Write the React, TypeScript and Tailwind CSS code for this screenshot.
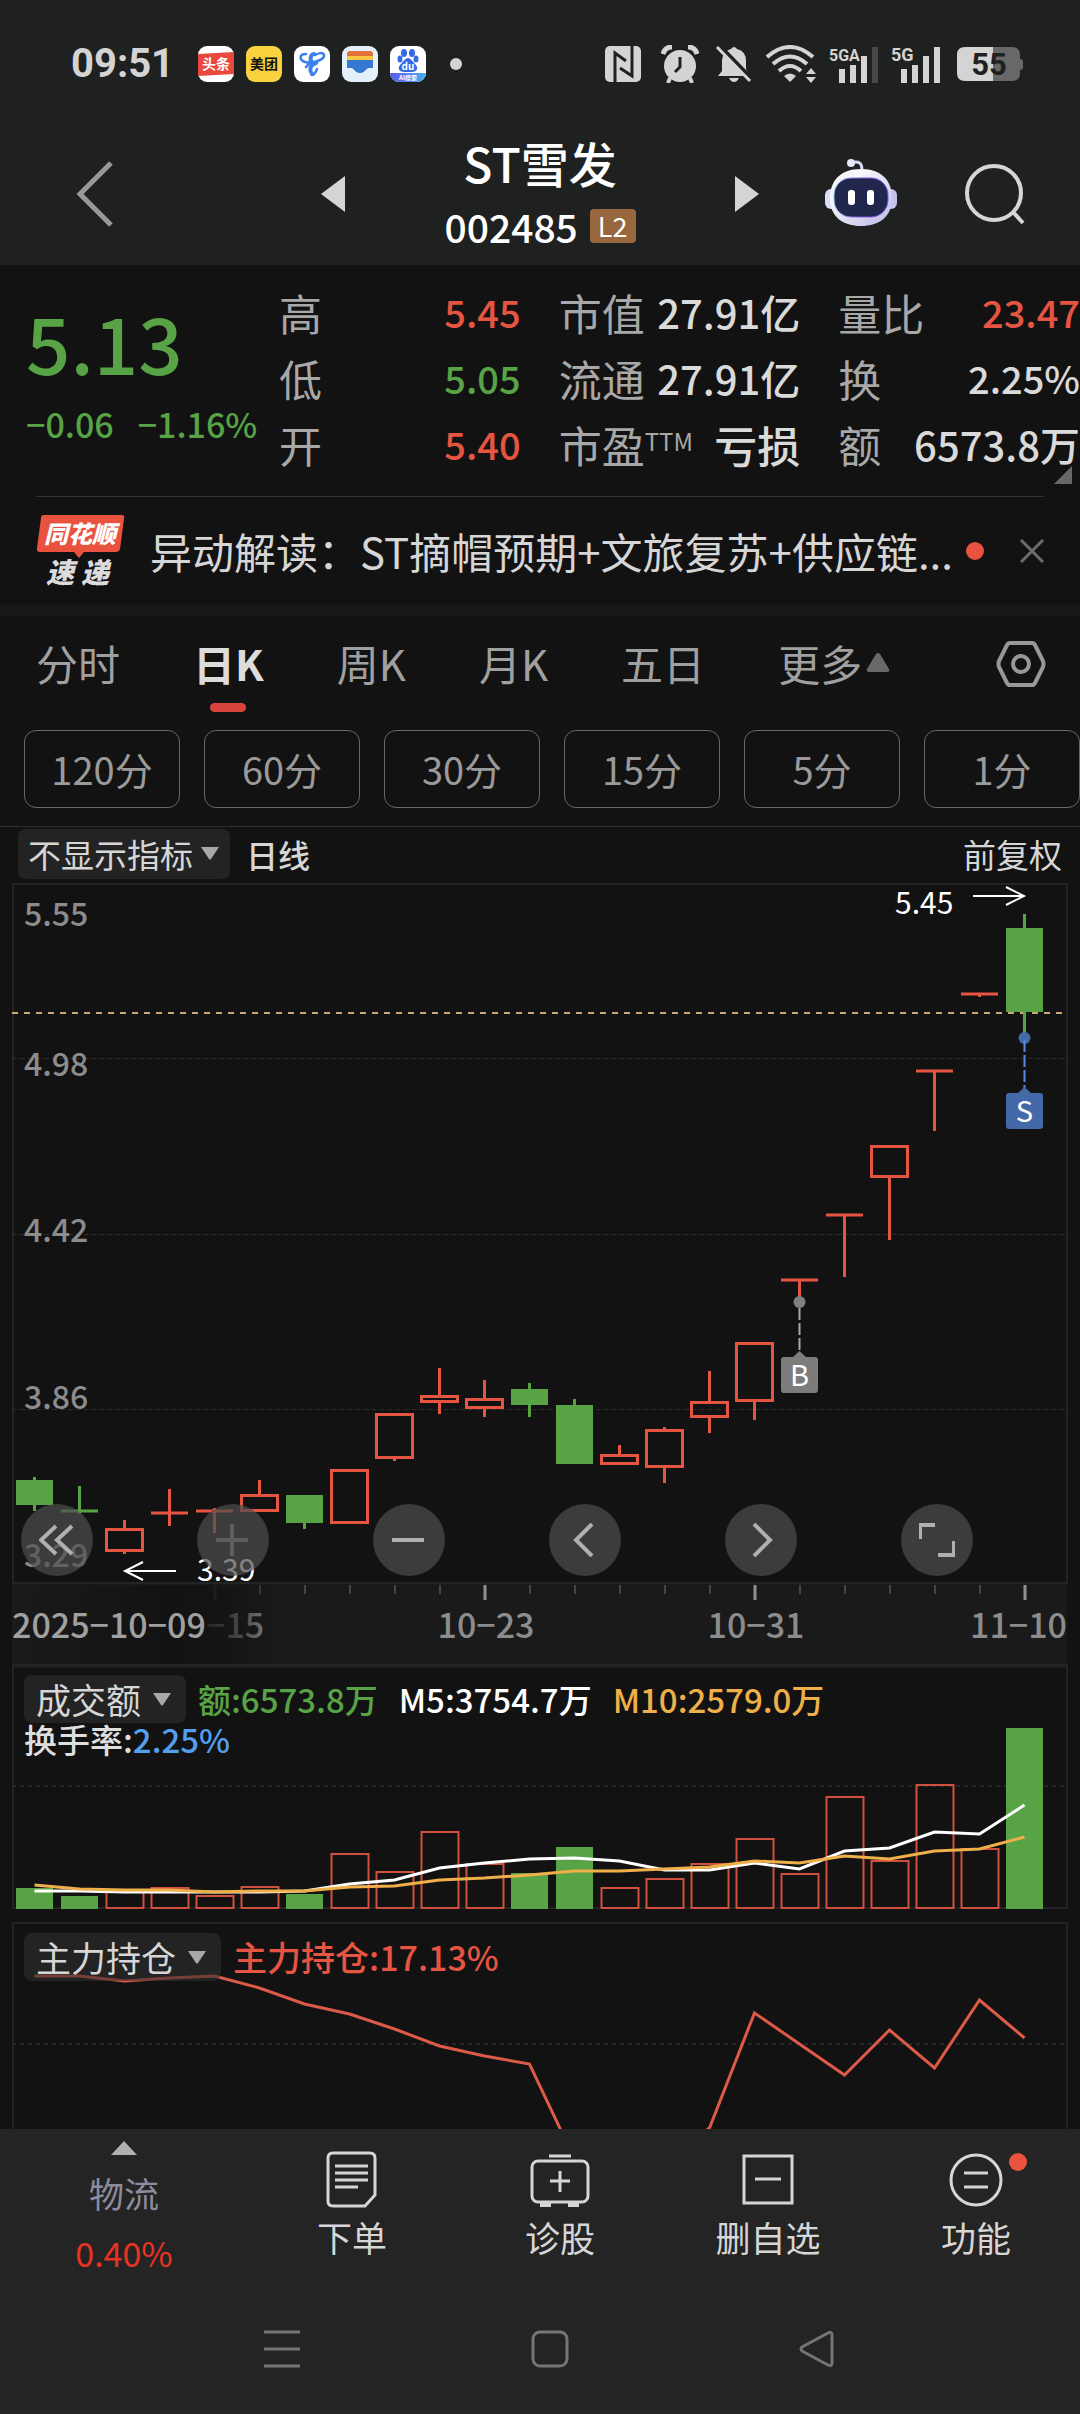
import React from "react";

const UP = "#e65541";
const DOWN = "#57a345";

// [shape, bodyTop, bodyBottom, high, low]
type Candle = ["up" | "down" | "flat" | "flatDown", number, number, number, number];

const CANDLES: Candle[] = [
  ["down", 1480, 1505, 1477, 1511],
  ["flatDown", 1511, 1511, 1486, 1514],
  ["up", 1528, 1552, 1520, 1554],
  ["flat", 1513, 1513, 1489, 1526],
  ["flat", 1511, 1511, 1508, 1533],
  ["up", 1494, 1512, 1480, 1512],
  ["down", 1495, 1523, 1495, 1529],
  ["up", 1469, 1524, 1469, 1524],
  ["up", 1413, 1459, 1413, 1461],
  ["up", 1395, 1403, 1368, 1414],
  ["up", 1398, 1409, 1380, 1417],
  ["down", 1389, 1405, 1383, 1417],
  ["down", 1405, 1464, 1399, 1464],
  ["up", 1454, 1465, 1445, 1465],
  ["up", 1429, 1468, 1427, 1483],
  ["up", 1401, 1418, 1371, 1433],
  ["up", 1342, 1402, 1342, 1420],
  ["flat", 1280, 1280, 1280, 1302],
  ["flat", 1215, 1215, 1215, 1277],
  ["up", 1145, 1178, 1145, 1240],
  ["flat", 1071, 1071, 1071, 1131],
  ["flat", 994, 994, 994, 997],
  ["down", 928, 1012, 914, 1038],
];

const VOLUMES = [
  1888, 1896, 1892, 1888, 1896, 1887, 1894, 1854, 1872, 1832, 1864, 1873, 1847,
  1888, 1879, 1864, 1839, 1874, 1797, 1861, 1785, 1849, 1728,
];
const VOLUME_DOWN = [0, 1, 6, 11, 12, 22];

const MA5 = [
  1891, 1891, 1892, 1892, 1892, 1892, 1891, 1884, 1880, 1868, 1863, 1859, 1858,
  1861, 1870, 1870, 1863, 1869, 1851, 1848, 1832, 1834, 1805,
];
const MA10 = [
  1885, 1889, 1890, 1890, 1892, 1891, 1891, 1887, 1886, 1880, 1878, 1875, 1871,
  1871, 1869, 1867, 1861, 1863, 1856, 1859, 1851, 1849, 1837,
];
const HOLDING = [
  1976, 1976, 1981, 1978, 1976, 1988, 2004, 2014, 2029, 2046, 2056, 2064, 2159,
  2200, 2160, 2128, 2013, 2044, 2075, 2030, 2068, 2000, 2038,
];

const cx = (i: number) => 34.5 + i * 45;
const toPoints = (ys: number[]) => ys.map((y, i) => `${cx(i)},${y}`).join(" ");

const StatusBar: React.FC = () => (
  <div className="h-32 pl-[71px] pr-[57px] flex items-center text-[#d4d4d4]">
    <span className="w-[127px] font-[Roboto] font-bold text-[40px] leading-[48px]">09:51</span>
    <div className="flex items-center gap-3">
      <svg width="36" height="36" viewBox="0 0 36 36">
        <rect width="36" height="36" rx="9" fill="#fff" />
        <path d="M0 8L36 6V28L0 30Z" fill="#e8483d" />
        <text x="18" y="23" fontSize="14" fontWeight="700" textAnchor="middle" fill="#fff">头条</text>
      </svg>
      <svg width="36" height="36" viewBox="0 0 36 36">
        <rect width="36" height="36" rx="9" fill="#fad13e" />
        <text x="18" y="23" fontSize="14" fontWeight="700" textAnchor="middle" fill="#111">美团</text>
      </svg>
      <svg width="36" height="36" viewBox="0 0 36 36" fill="none" stroke="#3d7ff0" strokeLinecap="round">
        <rect width="36" height="36" rx="9" fill="#fff" stroke="none" />
        <path d="M12 8C5 8 5 14 11 16C20 18 31 13 30 9C29 6 24 7 21 9" strokeWidth="2.5" />
        <path d="M20 8C16 8 15 16 20 18C16 20 15 24 18 28" strokeWidth="4" />
        <path d="M12 21C15 17 19 16 23 16M18 29C21 29 22 25 23 23" strokeWidth="2.5" />
      </svg>
      <svg width="36" height="36" viewBox="0 0 36 36">
        <rect width="36" height="36" rx="9" fill="#e3f0fb" />
        <path d="M5 8Q5 5 8 5H28Q31 5 31 8V12H5Z" fill="#e2703a" />
        <path d="M5 10H31V15H5Z" fill="#f7c744" />
        <path d="M5 14H31V22H27C24 22 23 27 18 27C13 27 12 22 9 22H5Z" fill="#3478d4" />
      </svg>
      <svg width="36" height="36" viewBox="0 0 36 36">
        <defs>
          <clipPath id="du">
            <rect width="36" height="36" rx="9" />
          </clipPath>
          <linearGradient id="band" x1="0" y1="0" x2="1" y2="0">
            <stop offset="0" stopColor="#5a5cf0" />
            <stop offset="1" stopColor="#4ab0f0" />
          </linearGradient>
        </defs>
        <g clipPath="url(#du)">
          <rect width="36" height="36" fill="#fff" />
          <rect y="27" width="36" height="9" fill="url(#band)" />
          <g fill="#3569e8">
            <ellipse cx="14" cy="7" rx="3" ry="4" />
            <ellipse cx="22" cy="7" rx="3" ry="4" />
            <ellipse cx="10" cy="13" rx="2.500" ry="3.500" />
            <ellipse cx="26" cy="13" rx="2.500" ry="3.500" />
            <path d="M18 12C21 12 23 16 26 19C29 23 26 26 22 26H14C10 26 7 23 10 19C13 16 15 12 18 12Z" />
          </g>
          <text x="18" y="24" fontSize="10" fontWeight="700" textAnchor="middle" fill="#fff">du</text>
          <text x="18" y="34" fontSize="6" fontWeight="700" textAnchor="middle" fill="#fff">AI搜索</text>
        </g>
      </svg>
    </div>
    <span className="ml-6 size-3 rounded-full bg-[#d4d4d4]" />

    <svg className="ml-auto" width="36" height="36" viewBox="0 0 36 36">
      <rect width="36" height="36" rx="5" fill="#d4d4d4" />
      <path d="M10 36V7L21 15M27 0V30L15 22" fill="none" stroke="#1f2120" strokeWidth="3" />
    </svg>
    <svg className="ml-5" width="38" height="38" viewBox="0 0 38 38">
      <circle cx="19" cy="21" r="16" fill="#d4d4d4" />
      <path d="M2 9Q4 2 11 2M36 9Q34 2 27 2" fill="none" stroke="#d4d4d4" strokeWidth="5" />
      <path d="M9 33L7 38M29 33L31 38" stroke="#d4d4d4" strokeWidth="4" />
      <path d="M19 12V22L14 27" fill="none" stroke="#1f2120" strokeWidth="3" />
    </svg>
    <svg className="ml-4" width="38" height="38" viewBox="0 0 38 38">
      <path d="M3 31L7 26V15Q8 6 16 4Q19 0 22 4Q31 6 31 16V24L34 31Z" fill="#d4d4d4" />
      <path d="M14 33H24Q22 37 19 37Q16 37 14 33Z" fill="#d4d4d4" />
      <path d="M4 0L38 35" stroke="#1f2120" strokeWidth="4" />
      <path d="M2 2L35 36" stroke="#d4d4d4" strokeWidth="3" />
    </svg>
    <svg className="ml-3" width="52" height="38" viewBox="0 0 52 38" fill="none" stroke="#d4d4d4">
      <path d="M2 12Q25 -8 48 12" strokeWidth="4" />
      <path d="M8 19Q25 4 42 19" strokeWidth="4" />
      <path d="M14 26Q25 16 36 26" strokeWidth="4" />
      <path d="M19 31Q25 26 31 31L25 37Z" fill="#d4d4d4" stroke="none" />
      <path d="M41 29L46 23L51 29ZM41 32L46 38L51 32Z" fill="#d4d4d4" stroke="none" />
    </svg>
    <svg className="ml-3 overflow-visible" width="50" height="40" viewBox="0 0 50 40" fill="#d4d4d4">
      <text x="0" y="17" fontSize="16" fontWeight="700" fontFamily="Roboto">5GA</text>
      <path d="M10 25h6v14h-6zM21 21h6v18h-6zM32 12h6v27h-6z" />
      <path d="M43 3h6v36h-6z" fill="#484848" />
    </svg>
    <svg className="ml-3 overflow-visible" width="50" height="40" viewBox="0 0 50 40" fill="#d4d4d4">
      <text x="0" y="17" fontSize="18" fontWeight="700" fontFamily="Roboto">5G</text>
      <path d="M10 25h6v14h-6zM21 21h6v18h-6zM32 12h6v27h-6zM43 3h6v36h-6z" />
    </svg>
    <svg className="ml-4 overflow-visible" width="66" height="34" viewBox="0 0 66 34">
      <path d="M8 0H36V34H8Q0 34 0 26V8Q0 0 8 0Z" fill="#d4d4d4" />
      <path d="M36 0H55Q63 0 63 8V12Q66 12 66 15V20Q66 23 63 23V26Q63 34 55 34H36Z" fill="#686868" />
      <text x="32" y="28" fontSize="31" fontWeight="700" fontFamily="Roboto" textAnchor="middle" fill="#1f2120">55</text>
    </svg>
  </div>
);

const Header: React.FC = () => (
  <header className="bg-[#1f2120]">
    <StatusBar />
    <div className="h-[137px] pl-[76px] pr-[54px] pb-[6px] flex items-center">
      <button aria-label="返回" className="mr-[208px]">
        <svg width="37" height="66" viewBox="0 0 37 66" fill="none" stroke="#989898" strokeWidth="5">
          <path d="M35 2L4 33L35 64" />
        </svg>
      </button>
      <button aria-label="上一只">
        <svg width="24" height="36" viewBox="0 0 24 36" fill="#d4d4d4">
          <path d="M24 0V36L0 18Z" />
        </svg>
      </button>
      <div className="flex-1 flex flex-col items-center text-white font-medium">
        <h1 className="text-[48px] leading-[64px]">ST雪发</h1>
        <div className="flex items-center gap-3 text-[39px] leading-[64px]">
          002485
          <span className="px-2 rounded-sm bg-[#98673d] text-[27px] leading-[34px] font-normal">L2</span>
        </div>
      </div>
      <button aria-label="下一只">
        <svg width="24" height="36" viewBox="0 0 24 36" fill="#d4d4d4">
          <path d="M0 0V36L24 18Z" />
        </svg>
      </button>
      <button aria-label="智能助手" className="ml-[66px] pb-1">
        <svg width="72" height="68" viewBox="0 0 72 68">
          <defs>
            <linearGradient id="shell" x1="0" y1="0" x2="1" y2="1">
              <stop offset="0.3" stopColor="#f6f6fc" />
              <stop offset="1" stopColor="#b9b6e6" />
            </linearGradient>
            <linearGradient id="rim" x1="0" y1="0" x2="1" y2="0">
              <stop offset="0" stopColor="#8fd0f0" />
              <stop offset="0.5" stopColor="#8a52d8" />
              <stop offset="1" stopColor="#6b5cf0" />
            </linearGradient>
          </defs>
          <path d="M26 5Q37 1 37 12" fill="none" stroke="#d9d9f2" strokeWidth="3" />
          <circle cx="26" cy="5" r="4" fill="#e6e6f6" />
          <rect x="0" y="31" width="12" height="20" rx="6" fill="#dcdcf4" />
          <rect x="60" y="31" width="12" height="20" rx="6" fill="#c4c2ec" />
          <path d="M36 11C58 11 67 24 67 40C67 59 54 68 36 68C18 68 5 59 5 40C5 24 14 11 36 11Z" fill="url(#shell)" />
          <rect x="9" y="20" width="54" height="39" rx="17" fill="#20264c" stroke="url(#rim)" strokeWidth="1" />
          <rect x="23" y="32" width="7" height="15" rx="3" fill="#fff" />
          <rect x="42" y="32" width="7" height="15" rx="3" fill="#fff" />
        </svg>
      </button>
      <button aria-label="搜索" className="ml-[68px]">
        <svg width="61" height="62" viewBox="0 0 61 62" fill="none" stroke="#d6d6d6" strokeWidth="4">
          <circle cx="29" cy="30" r="27" />
          <path d="M48 49L58 60" />
        </svg>
      </button>
    </div>
  </header>
);

interface StatProps {
  label: React.ReactNode;
  value: string;
  className?: string;
}

const Stat: React.FC<StatProps> = ({ label, value, className = "text-[40px] text-[#dadada]" }) => (
  <div className="h-[66px] flex justify-between items-center whitespace-nowrap">
    <dt className="text-[43px] leading-[60px] text-[#a8a8a8]">{label}</dt>
    <dd className={`leading-[60px] font-medium ${className}`}>{value}</dd>
  </div>
);

const Quote: React.FC = () => (
  <section className="relative pt-[14px] pl-[26px] pb-[19px] flex">
    <div className="w-[253px] shrink-0 text-[#57a345] font-medium">
      <div className="pt-5 text-[78px] leading-[84px]">5.13</div>
      <div className="pt-4 flex gap-6 text-[34px] leading-[50px] whitespace-nowrap">
        <span>−0.06</span>
        <span>−1.16%</span>
      </div>
    </div>
    <dl className="flex-1">
      <Stat label="高" value="5.45" className="text-[38px] text-[#e65541]" />
      <Stat label="低" value="5.05" className="text-[38px] text-[#57a345]" />
      <Stat label="开" value="5.40" className="text-[38px] text-[#e65541]" />
    </dl>
    <dl className="flex-1 mx-[38px]">
      <Stat label="市值" value="27.91亿" />
      <Stat label="流通" value="27.91亿" />
      <Stat
        label={
          <>
            市盈<sup className="text-[24px] leading-none">TTM</sup>
          </>
        }
        value="亏损"
        className="text-[43px] text-[#dadada]"
      />
    </dl>
    <dl className="flex-1">
      <Stat label="量比" value="23.47" className="text-[38px] text-[#e65541]" />
      <Stat label="换" value="2.25%" className="text-[38px] text-[#dadada]" />
      <Stat label="额" value="6573.8万" />
    </dl>
    <svg className="absolute right-2 bottom-3" width="18" height="18" viewBox="0 0 18 18" fill="#686868">
      <path d="M18 0V18H0Z" />
    </svg>
  </section>
);

const News: React.FC = () => (
  <section className="mx-9 h-[108px] border-t border-[#333] flex items-center">
    <svg className="shrink-0 overflow-visible" width="90" height="74" viewBox="0 0 90 74">
      <path d="M8 1H86Q89 1 88 5L84 35Q83 38 80 38H48L43 44L38 38H4Q0 38 1 34L5 4Q5 1 8 1Z" fill="#e8523f" />
      <text x="44" y="29" fontSize="24" fontWeight="900" fontStyle="italic" textAnchor="middle" fill="#fff">同花顺</text>
      <text x="10" y="69" fontSize="28" fontWeight="900" fontStyle="italic" fill="#dcdcdc">速</text>
      <text x="45" y="69" fontSize="28" fontWeight="900" fontStyle="italic" fill="#dcdcdc">递</text>
    </svg>
    <a href="#news" className="ml-6 flex-1 text-[42px] leading-[60px] whitespace-nowrap text-[#d6d6d6]">
      异动解读：ST摘帽预期+文旅复苏+供应链...
    </a>
    <span className="size-[18px] rounded-full bg-[#e8523f]" />
    <button aria-label="关闭" className="ml-9">
      <svg width="24" height="24" viewBox="0 0 24 24" stroke="#6c6c6c" strokeWidth="3">
        <path d="M1 1L23 23M23 1L1 23" />
      </svg>
    </button>
  </section>
);

const TABS = ["分时", "日K", "周K", "月K", "五日"];
const MINUTES = ["120分", "60分", "30分", "15分", "5分", "1分"];

const Periods: React.FC = () => (
  <section className="border-t-12 border-[#171717]">
    <nav className="h-[114px] pl-9 pr-[34px] flex gap-[73px] items-start text-[42px] leading-[60px] text-[#a0a0a0]">
      {TABS.map((tab) =>
        tab === "日K" ? (
          <button key={tab} className="pt-[17px] flex flex-col items-center font-bold text-[#dcdcdc]">
            {tab}
            <span className="mt-[10px] w-9 h-[9px] rounded-full bg-[#d8443b]" />
          </button>
        ) : (
          <button key={tab} className="pt-[17px]">
            {tab}
          </button>
        )
      )}
      <button className="pt-[17px] flex items-center gap-1">
        更多
        <svg width="24" height="20" viewBox="0 0 24 20" fill="#686868">
          <path d="M10 1Q12 -1 14 1L23 16Q24 19 21 19H3Q0 19 1 16Z" />
        </svg>
      </button>
      <button aria-label="设置" className="pt-6 ml-auto">
        <svg width="50" height="48" viewBox="0 0 50 48" fill="none" stroke="#989898" strokeWidth="4">
          <path d="M14 3H36Q38 3 39 5L47 21Q48 24 47 27L39 43Q38 45 36 45H14Q12 45 11 43L3 27Q2 24 3 21L11 5Q12 3 14 3Z" />
          <circle cx="25" cy="24" r="8" />
        </svg>
      </button>
    </nav>
    <div className="pl-6 pb-[18px] grid grid-cols-6 gap-6 border-b border-[#303030]">
      {MINUTES.map((m) => (
        <button key={m} className="h-[78px] border border-[#686868] rounded-xl text-[38px] leading-[60px] text-[#9a9a9a]">
          {m}
        </button>
      ))}
    </div>
  </section>
);

interface PickerProps {
  name: string;
  value: string;
  className: string;
}

const Picker: React.FC<PickerProps> = ({ name, value, className }) => (
  <span className={`flex items-center bg-[#2e2e2e]/60 rounded-lg text-[#d6d6d6] ${className}`}>
    <select aria-label={name} className="appearance-none bg-transparent leading-[48px] outline-none">
      <option>{value}</option>
    </select>
    <svg width="18" height="13" viewBox="0 0 18 13" fill="#a8a8a8">
      <path d="M0 0H18L10 12Q9 13 8 12Z" />
    </svg>
  </span>
);

const PriceChart: React.FC = () => (
  <svg viewBox="0 880 1080 784" className="block w-full h-auto">
    <defs>
      <linearGradient id="fade" x1="0" y1="0" x2="1" y2="0">
        <stop offset="0" stopColor="#121212" stopOpacity="0" />
        <stop offset="0.6" stopColor="#121212" />
        <stop offset="0.8" stopColor="#121212" stopOpacity="0.7" />
        <stop offset="1" stopColor="#121212" stopOpacity="0" />
      </linearGradient>
    </defs>
    <rect x="12" y="1583" width="1055" height="81" fill="#1a1a1a" />
    <path d="M13 1583V884H1067V1583Z" fill="none" stroke="#242424" strokeWidth="2" />
    <g stroke="#2c2c2c" strokeWidth="1" strokeDasharray="5 3">
      <path d="M12 1058.500H1066" />
      <path d="M12 1234.500H1066" />
      <path d="M12 1409.500H1066" />
    </g>
    <path d="M12 1013H1066" stroke="#c9a877" strokeWidth="2" strokeDasharray="6 6" />

    <g fontSize="32" fontWeight="500" fill="#8c8c8c">
      <text x="24" y="926">5.55</text>
      <text x="24" y="1076">4.98</text>
      <text x="24" y="1242">4.42</text>
      <text x="24" y="1409">3.86</text>
      <text x="24" y="1567">3.29</text>
    </g>

    {CANDLES.map(([shape, top, bottom, high, low], i) => {
      const x = cx(i);
      const color = shape === "down" || shape === "flatDown" ? DOWN : UP;
      return (
        <g key={i} stroke={color} strokeWidth="3">
          {shape === "down" && <rect x={x - 18.5} y={top} width="37" height={bottom - top} fill={color} stroke="none" />}
          {shape === "up" && <rect x={x - 18} y={top + 1.5} width="36" height={bottom - top - 3} fill="none" />}
          {(shape === "flat" || shape === "flatDown") && <path d={`M${x - 18.5} ${top}H${x + 18.5}`} />}
          <path d={`M${x} ${high}V${top}M${x} ${bottom}V${low}`} />
        </g>
      );
    })}

    {/* buy and sell marks */}
    <circle cx={cx(17)} cy="1302" r="6" fill="#808080" />
    <path d={`M${cx(17)} 1308V1352`} stroke="#a8a8a8" strokeWidth="2" strokeDasharray="12 3" />
    <path d="M781 1360Q781 1357 784 1357H793L799.500 1351L806 1357H815Q818 1357 818 1360V1390Q818 1393 815 1393H784Q781 1393 781 1390Z" fill="#7c7c7c" />
    <text x={cx(17)} y="1386" fontSize="29" textAnchor="middle" fill="#fff">B</text>
    <circle cx={cx(22)} cy="1038" r="6" fill="#4469a8" />
    <path d={`M${cx(22)} 1040V1088`} stroke="#5b8be0" strokeWidth="2" strokeDasharray="12 3" />
    <path d="M1006 1096Q1006 1093 1009 1093H1018L1024.500 1087L1031 1093H1040Q1043 1093 1043 1096V1126Q1043 1129 1040 1129H1009Q1006 1129 1006 1126Z" fill="#4469a8" />
    <text x={cx(22)} y="1122" fontSize="29" textAnchor="middle" fill="#fff">S</text>

    <g fontSize="30" fill="#fff">
      <text x="895" y="914">5.45</text>
      <text x="197" y="1581">3.39</text>
    </g>
    <g fill="none" stroke="#fff" strokeWidth="2">
      <path d="M973 896H1024M1006 887L1024 896L1006 905" />
      <path d="M176 1571H125M143 1562L125 1571L143 1580" />
    </g>

    {CANDLES.map((_, i) => {
      if (i < 4) return null;
      const major = i === 10 || i === 16 || i === 22;
      return (
        <path
          key={i}
          d={`M${cx(i) + 0.5} 1585V${major || i === 4 ? 1600 : 1594}`}
          stroke={major ? "#909090" : "#444"}
          strokeWidth={major || i === 4 ? 3 : 2}
        />
      );
    })}
    <g fontSize="34" fontWeight="500" fill="#8c8c8c">
      <text x="206" y="1638">−15</text>
      <text x="486" y="1638" textAnchor="middle">10−23</text>
      <text x="756" y="1638" textAnchor="middle">10−31</text>
      <text x="1067" y="1638" textAnchor="end">11−10</text>
    </g>
    <rect x="12" y="1585" width="270" height="79" fill="url(#fade)" />
    <text x="12" y="1638" fontSize="34" fontWeight="500" fill="#a0a0a0">2025−10−09</text>
  </svg>
);

const TOOLS = [
  { name: "历史", d: "M17 2L2 16L17 30M33 2L18 16L33 30", dim: false },
  { name: "放大", d: "M1 16H33M17 0V32", dim: true },
  { name: "缩小", d: "M1 16H33", dim: false },
  { name: "左移", d: "M25 0L9 16L25 32", dim: false },
  { name: "右移", d: "M11 0L27 16L11 32", dim: false },
  { name: "全屏", d: "M1 15V1H16M35 17V31H19", dim: false },
];

const Chart: React.FC = () => (
  <section>
    <div className="h-[53px] px-[18px] flex items-center text-[33px] leading-[50px] text-[#d6d6d6]">
      <Picker name="指标" value="不显示指标" className="h-[50px] pl-[10px] pr-[11px] gap-2" />
      <span className="ml-4 text-[32px] font-medium">日线</span>
      <button className="ml-auto">前复权</button>
    </div>
    <div className="relative">
      <PriceChart />
      <div className="absolute bottom-[88px] left-[21px] right-[107px] flex justify-between">
        {TOOLS.map((tool) => (
          <button key={tool.name} aria-label={tool.name} className="size-[72px] rounded-full bg-[#4e4e4e]/70 flex items-center justify-center">
            <svg width="36" height="34" viewBox="0 -1 36 34" fill="none" stroke={tool.dim ? "#5e5e5e" : "#b0b0b0"} strokeWidth="4">
              <path d={tool.d} />
            </svg>
          </button>
        ))}
      </div>
    </div>
  </section>
);

const Volume: React.FC = () => (
  <section className="relative text-[33px] leading-[34px]">
    <svg viewBox="0 1664 1080 258" className="block w-full h-auto">
      <path d="M12 1666H1067" stroke="#1e1e1e" strokeWidth="4" />
      <path d="M13 1908V1665H1067V1908Z" fill="none" stroke="#242424" strokeWidth="2" />
      <path d="M12 1786H1066" stroke="#262626" strokeWidth="2" strokeDasharray="4 4" />
      {VOLUMES.map((top, i) =>
        VOLUME_DOWN.includes(i) ? (
          <rect key={i} x={cx(i) - 18.5} y={top} width="37" height={1909 - top} fill={DOWN} />
        ) : (
          <rect key={i} x={cx(i) - 18} y={top} width="37" height={1908 - top} fill="none" stroke="#d0503f" strokeWidth="2" />
        )
      )}
      <polyline points={toPoints(MA5)} fill="none" stroke="#fff" strokeWidth="3" />
      <polyline points={toPoints(MA10)} fill="none" stroke="#efb04a" strokeWidth="3" />
    </svg>
    <div className="absolute top-[11px] left-6 right-6 flex items-center font-medium">
      <Picker name="成交额" value="成交额" className="h-12 pl-3 pr-[15px] gap-[11px] text-[35px] font-normal" />
      <span className="ml-3 text-[#57a345]">额:6573.8万</span>
      <span className="ml-[21px] text-white">M5:3754.7万</span>
      <span className="ml-[21px] text-[#efb04a]">M10:2579.0万</span>
    </div>
    <div className="absolute top-[58px] left-6 font-medium text-[#dedede]">
      换手率:<span className="text-[#539fee]">2.25%</span>
    </div>
  </section>
);

const Holding: React.FC = () => (
  <section className="relative text-[34px] leading-[34px]">
    <svg viewBox="0 1922 1080 207" className="block w-full h-auto">
      <path d="M13 2140V1923H1067V2140" fill="none" stroke="#242424" strokeWidth="2" />
      <path d="M12 2044H1066" stroke="#262626" strokeWidth="2" strokeDasharray="4 4" />
      <polyline points={toPoints(HOLDING)} fill="none" stroke="#dc5a48" strokeWidth="3" />
    </svg>
    <div className="absolute top-[11px] left-6 flex items-center">
      <Picker name="主力持仓" value="主力持仓" className="h-12 pl-3 pr-[15px] gap-[11px] text-[35px]" />
      <span className="ml-3 font-medium text-[#e65541]">主力持仓:17.13%</span>
    </div>
  </section>
);

interface ActionProps {
  label: string;
  dot?: boolean;
  children: React.ReactNode;
}

const Action: React.FC<ActionProps> = ({ label, dot, children }) => (
  <button className="relative flex-1 pt-5 flex flex-col items-center gap-1">
    <svg width="60" height="60" viewBox="0 0 60 60" fill="none" stroke="#d6d6d6" strokeWidth="3">
      {children}
    </svg>
    {dot && <span className="absolute top-6 right-[53px] size-[18px] rounded-full bg-[#e8523f]" />}
    <span className="text-[35px] leading-[48px] text-[#d6d6d6]">{label}</span>
  </button>
);

const BottomBar: React.FC = () => (
  <footer className="bg-[#242424]">
    <div className="h-[165px] flex items-start">
      <button className="w-[248px] pt-3 flex flex-col items-center text-[34px] leading-[60px]">
        <svg width="26" height="14" viewBox="0 0 26 14" fill="#b0b0b0">
          <path d="M13 0L26 14H0Z" />
        </svg>
        <span className="pt-2 text-[35px] text-[#8c8c9c]">物流</span>
        <span className="text-[#e83323]">0.40%</span>
      </button>
      <Action label="下单">
        <path d="M11 4H48Q53 4 53 9V46L43 57H11Q6 57 6 52V9Q6 4 11 4Z" />
        <path d="M13 17H46M13 24H46M13 31H46M13 38H36" />
      </Action>
      <Action label="诊股">
        <rect x="2" y="12" width="56" height="41" rx="6" />
        <path d="M19 7H41M30 22V43M20 32H40" />
        <path d="M10 56H21M38 56H49" strokeWidth="4" />
      </Action>
      <Action label="删自选">
        <rect x="6" y="7" width="48" height="47" />
        <path d="M17 30H43" />
      </Action>
      <Action label="功能" dot>
        <circle cx="30" cy="31" r="25" />
        <path d="M18 24H42M18 38H42" />
      </Action>
    </div>
    <div className="h-[120px] pt-9 pl-[264px] pr-[246px] flex justify-between items-start">
      <button aria-label="最近任务">
        <svg width="36" height="38" viewBox="0 0 36 38" stroke="#757575" strokeWidth="3">
          <path d="M0 2H36M0 19H36M0 36H36" />
        </svg>
      </button>
      <button aria-label="主屏幕">
        <svg width="38" height="38" viewBox="0 0 38 38" fill="none" stroke="#757575" strokeWidth="3">
          <rect x="2" y="2" width="34" height="34" rx="7" />
        </svg>
      </button>
      <button aria-label="后退">
        <svg width="35" height="38" viewBox="0 0 35 38" fill="none" stroke="#757575" strokeWidth="3" strokeLinejoin="round">
          <path d="M29 3Q33 1 33 5V33Q33 37 29 35L3 21Q1 19 3 17Z" />
        </svg>
      </button>
    </div>
  </footer>
);

export default function App() {
  return (
    <div className="bg-[#121212] overflow-hidden font-['Noto_Sans_CJK_SC',sans-serif]">
      <Header />
      <Quote />
      <News />
      <Periods />
      <Chart />
      <Volume />
      <Holding />
      <BottomBar />
    </div>
  );
}
